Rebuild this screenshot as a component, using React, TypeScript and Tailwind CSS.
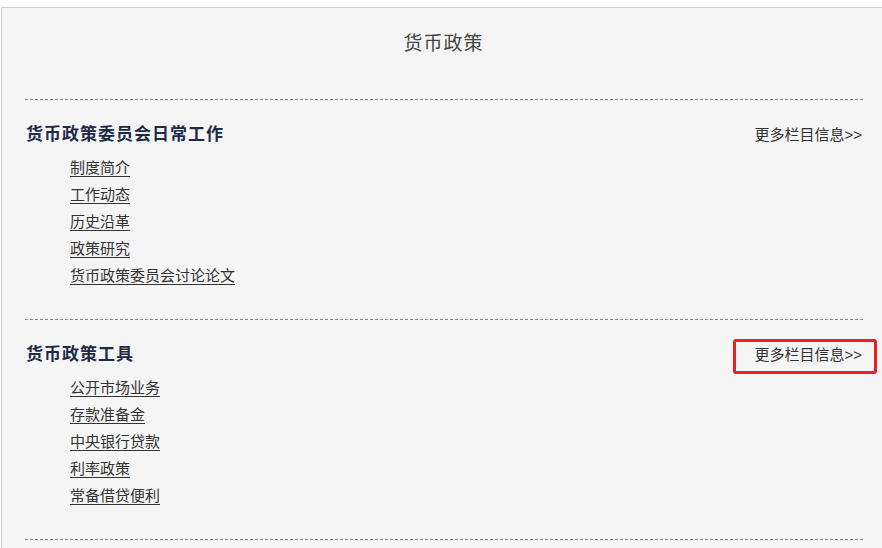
import React from "react";

const sections = [
  {
    title: "货币政策委员会日常工作",
    links: ["制度简介", "工作动态", "历史沿革", "政策研究", "货币政策委员会讨论论文"],
    highlight: false,
  },
  {
    title: "货币政策工具",
    links: ["公开市场业务", "存款准备金", "中央银行贷款", "利率政策", "常备借贷便利"],
    highlight: true,
  },
];

const cjk = { fontFamily: '"Liberation Sans", "Noto Sans CJK SC", sans-serif' };

export default function App() {
  return (
    <div className="w-[882px] h-[548px] overflow-hidden bg-white pt-[7px] pl-[1px]" style={cjk}>
      <div className="h-[600px] border-t border-l border-[#cfcfcf] bg-[#f5f5f5]">
        <div
          className="pt-[24px] pl-[3px] text-center text-[19px] leading-[24px] text-[#444] tracking-[1px]"
          style={{ fontFamily: '"Liberation Serif", "Noto Sans CJK SC", serif' }}
        >
          货币政策
        </div>
        <div className="ml-[23px] mr-[19px] mt-[43px]">
          {sections.map((s) => (
            <div key={s.title} className="border-t border-dashed border-[#8a8a8a] pt-[23px] pb-[30px]">
              <div className="flex items-center justify-between h-[24px]">
                <span className="ml-[1px] text-[17px] font-bold leading-[24px] text-[#1d2a48] tracking-[1px]">
                  {s.title}
                </span>
                <span className="relative mr-[1px] text-[15px] leading-[24px] text-[#333]">
                  更多栏目信息&gt;&gt;
                  {s.highlight && (
                    <span className="absolute -left-[21px] -right-[15px] -top-[4px] -bottom-[7px] rounded-[3px] border-[3px] border-[#e52420]" />
                  )}
                </span>
              </div>
              <ul className="mt-[7px] pl-[45px]">
                {s.links.map((l) => (
                  <li key={l} className="text-[15px] leading-[27px] text-[#333]">
                    <a className="underline underline-offset-[3px] decoration-[#333]" href="#">
                      {l}
                    </a>
                  </li>
                ))}
              </ul>
            </div>
          ))}
          <div className="border-t border-dashed border-[#8a8a8a]" />
        </div>
      </div>
    </div>
  );
}
